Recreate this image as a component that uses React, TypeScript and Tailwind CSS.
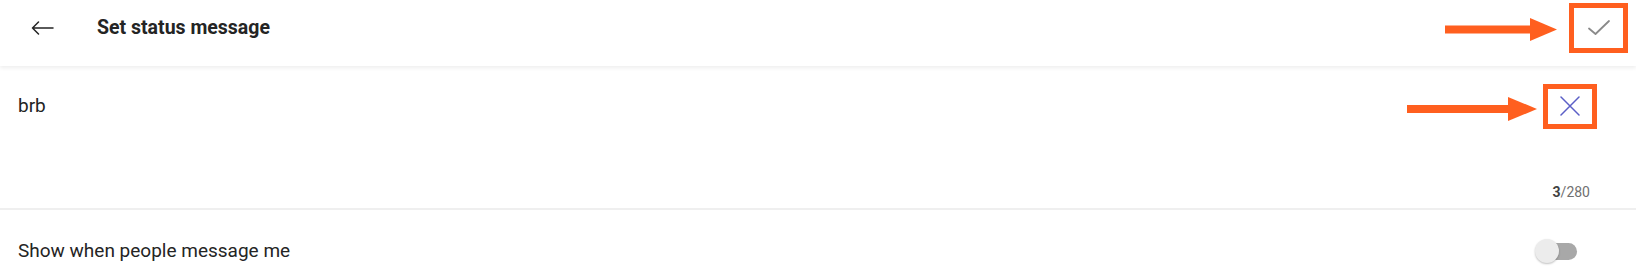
import React from 'react';

const ORANGE = '#ff5f1f';

const Callout: React.FC<{ left: number; top: number; shaft: number; head: number; headH: number }> = ({
  left,
  top,
  shaft,
  head,
  headH,
}) => (
  <svg
    className="absolute z-20 pointer-events-none"
    style={{ left, top }}
    width={shaft + head}
    height={headH}
    viewBox={`0 0 ${shaft + head} ${headH}`}
  >
    <rect x={0} y={headH / 2 - 4} width={shaft + 1} height={8} fill={ORANGE} />
    <polygon points={`${shaft},0 ${shaft + head},${headH / 2} ${shaft},${headH}`} fill={ORANGE} />
  </svg>
);

const App: React.FC = () => {
  return (
    <div className="relative w-[1636px] h-[275px] overflow-hidden bg-white font-['Roboto','Liberation_Sans',sans-serif] text-[#242424]">
      {/* header */}
      <div className="relative z-10 flex h-[66px] items-center pb-[11px] pl-[31px] pr-[26px] bg-white shadow-[0_2px_4px_rgba(0,0,0,0.07)]">
        <button className="flex items-center">
          <svg width="23" height="14" viewBox="0 0 23 14" fill="none" stroke="#242424" strokeWidth="1.5" strokeLinecap="round" strokeLinejoin="round">
            <path d="M22 7H1.5M7.5 1L1.5 7l6 6" />
          </svg>
        </button>
        <h1 className="ml-[43px] text-[19.5px] leading-[24px] font-bold">Set status message</h1>
        <button className="ml-auto flex items-center">
          <svg width="22" height="15" viewBox="0 0 22 15" fill="none" stroke="#8a8a8a" strokeWidth="1.8" strokeLinecap="round" strokeLinejoin="round">
            <path d="M1 8.5l6.5 5.5L21 1" />
          </svg>
        </button>
      </div>

      {/* message input */}
      <div className="flex h-[144px] flex-col pt-[28px] pb-[6px] border-b-2 border-[#efefef]">
        <div className="flex h-[24px] items-center justify-between pl-[18px] pr-[56px]">
          <span className="text-[19px] leading-[24px]">brb</span>
          <button className="flex items-center">
            <svg width="20" height="20" viewBox="0 0 20 20" fill="none" stroke="#5b5fc7" strokeWidth="1.5" strokeLinecap="round">
              <path d="M1 1l18 18M19 1L1 19" />
            </svg>
          </button>
        </div>
        <div className="mt-auto self-end pr-[46px] text-[14px] leading-[20px] text-[#707070]">
          <span className="font-bold text-[#424242]">3</span>/280
        </div>
      </div>

      {/* toggle row */}
      <div className="flex h-[82px] items-center justify-between pl-[18px] pr-[59px]">
        <span className="text-[19px] leading-[24px]">Show when people message me</span>
        <div className="relative h-[24px] w-[42px]">
          <div className="absolute left-[5px] right-0 top-[4px] h-[17px] rounded-full bg-[#a8a8a8]" />
          <div className="absolute left-0 top-0 h-[24px] w-[24px] rounded-full bg-[#ececec] shadow-[0_1px_2px_rgba(0,0,0,0.25)]" />
        </div>
      </div>

      {/* annotations */}
      <div className="absolute z-20 left-[1569px] top-[3px] h-[50px] w-[59px] border-[5px] border-[#ff5f1f]" />
      <div className="absolute z-20 left-[1543px] top-[84px] h-[45px] w-[54px] border-[5px] border-[#ff5f1f]" />
      <Callout left={1445} top={18} shaft={85} head={27} headH={23} />
      <Callout left={1407} top={97} shaft={101} head={29} headH={24} />
    </div>
  );
};

export default App;
